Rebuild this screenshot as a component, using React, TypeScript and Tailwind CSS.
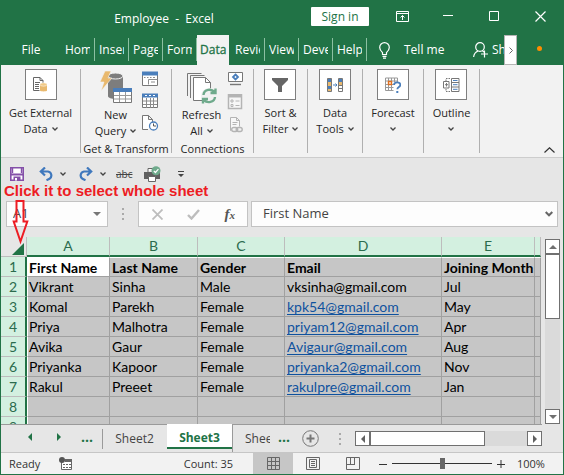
import type { ReactNode } from "react";

const UI = "font-['Open_Sans','Noto_Sans',sans-serif]";
const CELL = "font-['Lato','Noto_Sans',sans-serif]";

const TABS = ["Hom", "Inser", "Page", "Form", "Data", "Revie", "View", "Deve", "Help"];

const COLUMNS = [
  { letter: "A", width: "w-[83px]" },
  { letter: "B", width: "w-[88px]" },
  { letter: "C", width: "w-[87px]" },
  { letter: "D", width: "w-[157px]" },
  { letter: "E", width: "w-[93px]" },
  { letter: "", width: "" },
];

const ROWS: string[][] = [
  ["First Name", "Last Name", "Gender", "Email", "Joining Month"],
  ["Vikrant", "Sinha", "Male", "vksinha@gmail.com", "Jul"],
  ["Komal", "Parekh", "Female", "kpk54@gmail.com", "May"],
  ["Priya", "Malhotra", "Female", "priyam12@gmail.com", "Apr"],
  ["Avika", "Gaur", "Female", "Avigaur@gmail.com", "Aug"],
  ["Priyanka", "Kapoor", "Female", "priyanka2@gmail.com", "Nov"],
  ["Rakul", "Preeet", "Female", "rakulpre@gmail.com", "Jan"],
  [],
  [],
];

function Chevron({ className = "" }: { className?: string }) {
  return (
    <svg width="6" height="4" viewBox="0 0 6 4" fill="none" stroke="#444" strokeWidth="1.3" className={className}>
      <path d="M0.5 0.5L3 3L5.500 0.500" />
    </svg>
  );
}

function TitleBar() {
  return (
    <header className="flex h-[35px] shrink-0 items-start text-white">
      <h1 className="flex-1 whitespace-pre pt-[10px] pl-4 text-center text-[12px] leading-[18px]">Employee  -  Excel</h1>
      <button className="mt-[7px] mr-[10px] h-[19px] w-[58px] rounded-[1px] bg-white text-[12px] leading-[18px] text-[#217346]">
        Sign in
      </button>
      <div className="flex h-8">
        <button aria-label="Ribbon display options" className="flex w-[46px] items-center justify-center">
          <svg width="13" height="11" viewBox="0 0 13 11" fill="none" stroke="#fff">
            <path d="M0.500 0.500h12v10h-12zM0.500 2.500h12M6.500 9V4.500M4.500 6.500l2-2l2 2" />
          </svg>
        </button>
        <button aria-label="Minimize" className="flex w-[46px] items-center justify-center">
          <svg width="10" height="10" stroke="#fff"><path d="M0 4.500h10" /></svg>
        </button>
        <button aria-label="Maximize" className="flex w-[46px] items-center justify-center">
          <svg width="10" height="10" fill="none" stroke="#fff"><path d="M0.500 0.500h9v9h-9z" /></svg>
        </button>
        <button aria-label="Close" className="flex w-[46px] items-center justify-center">
          <svg width="11" height="11" stroke="#fff" strokeWidth="1.200"><path d="M0.500 0.500l10 10M10.500 0.500l-10 10" /></svg>
        </button>
      </div>
    </header>
  );
}

function TabBar() {
  return (
    <nav className="flex h-[30px] shrink-0 text-[12px] leading-[30px] text-white">
      <button className="w-[60px] text-center">File</button>
      {TABS.map((name) =>
        name === "Data" ? (
          <button key={name} className="h-full w-[34px] border-r-2 border-[#217346] bg-[#f2f2f2] px-[3px] text-left text-[#217346] [-webkit-text-stroke:0.3px]">
            {name}
          </button>
        ) : (
          <button key={name} className="mt-[3px] h-[23px] w-[34px] border-r border-[#8cc0a2] px-1 text-left leading-[24px]">
            <span className="block overflow-hidden whitespace-nowrap">{name}</span>
          </button>
        ),
      )}
      <button className="ml-3 flex items-center gap-[14px] whitespace-nowrap">
        <svg width="11" height="17" viewBox="0 0 11 17" fill="none" stroke="#fff" strokeWidth="1.200">
          <path d="M3.500 12.500v-2C2 9 0.700 7.800 0.700 5.400a4.800 4.800 0 0 1 9.600 0c0 2.400-1.300 3.600-2.800 5.100v2zM3.500 14.300h4M4 16.200h3" />
        </svg>
        Tell me
      </button>
      <div className="flex-1" />
      <button className="flex w-[31px] items-center gap-1 overflow-hidden whitespace-nowrap">
        <svg width="15" height="16" viewBox="0 0 15 16" fill="none" stroke="#fff" strokeWidth="1.200" className="shrink-0">
          <circle cx="7" cy="5" r="4.300" />
          <path d="M0.600 15c0.400-3.200 2-5 4.400-6M9.500 9l1.500 1M11.500 8.500v7M8 12h7" />
        </svg>
        Sh
      </button>
      <button aria-label="Scroll tabs" className="flex h-[30px] w-[13px] items-center justify-center border border-[#b5b5b5] bg-white">
        <svg width="4" height="7" fill="none" stroke="#666"><path d="M0.500 0.500l3 3l-3 3" /></svg>
      </button>
      <span className="mt-[11px] mr-[21px] ml-[20px] size-[5px] rounded-full bg-[#ff8c00]" />
    </nav>
  );
}

function IconBox({ children }: { children: ReactNode }) {
  return <span className="flex h-[31px] w-8 items-center justify-center border border-[#7f7f7f] bg-white">{children}</span>;
}

function Group({ width, icon, lines }: { width: string; icon: ReactNode; lines: string[] }) {
  return (
    <section className={`${width} flex h-[84px] shrink-0 flex-col items-center border-r border-[#b0b0b0]`}>
      <button className="flex flex-col items-center text-center text-[11px] leading-4 whitespace-nowrap">
        <IconBox>{icon}</IconBox>
        <span className="mt-[5px]">{lines[0]}</span>
        <span className="flex h-4 items-center gap-1">
          {lines[1] && <span>{lines[1]}</span>}
          <Chevron />
        </span>
      </button>
    </section>
  );
}

function MiniTable({ full }: { full?: boolean }) {
  return (
    <svg width="16" height="16" viewBox="0 0 16 16" fill="none">
      <path d="M0.500 1.500h15v13h-15z" fill="#fff" stroke="#777" />
      <path d="M0 0.500h16v4h-16z" fill="#4a7ebb" />
      {full ? (
        <>
          <path d="M4.500 5v10M8.500 5v10M11.500 5v10M1 8h14M1 11.500h14" stroke="#8c8c8c" />
          <path d="M3 2.500h2M7 2.500h2M11 2.500h2" stroke="#fff" />
        </>
      ) : (
        <path d="M2 6.500h1.500M5 6.500h1.500M8 6.500h1.500M11 6.500h2M6.500 8.500v5M6.500 8.500h9M9 11h4" stroke="#8c8c8c" />
      )}
    </svg>
  );
}

function Ribbon() {
  return (
    <div className="flex h-[93px] shrink-0 items-start border-b border-[#cdcdcd] bg-[#f2f2f2] pt-1 text-[#262626]">
      <Group
        width="w-20"
        lines={["Get External", "Data"]}
        icon={
          <svg width="15" height="16" viewBox="0 0 15 16" fill="none" stroke="#666">
            <path d="M0.500 0.500h6.500l3 3v3M7 0.500v3h3M0.500 0.500v13h6M2 5.500h5M2 7.500h4M2 9.500h4M2 11.500h4" />
            <path d="M7 7.500v6c0 1.200 7 1.200 7 0v-6z" fill="#e9b96e" stroke="none" />
            <ellipse cx="10.500" cy="7.500" rx="3.500" ry="1.700" fill="#f0c987" stroke="#fff" strokeWidth="0.500" />
          </svg>
        }
      />
      <section className="flex h-[84px] w-[91px] shrink-0 flex-col items-center border-r border-[#b0b0b0] text-[11px] leading-4 whitespace-nowrap">
        <div className="flex gap-1 self-start pl-3">
          <button className="flex w-[45px] flex-col items-center">
            <svg width="32" height="33" viewBox="0 0 32 33" fill="none" className="mt-[2px]">
              <path d="M8 5v20c0 4 15 4 15 0V5z" fill="#7d7d7d" />
              <ellipse cx="15.500" cy="5" rx="7.500" ry="3" fill="#7d7d7d" stroke="#f2f2f2" />
              <path d="M5 0h6L8 7h4L1 20l3-9H0z" fill="#e9b96e" stroke="#f2f2f2" strokeWidth="0.600" />
              <path d="M13.500 17.500h18v14h-18z" fill="#fff" stroke="#777" />
              <path d="M13 17h19v4H13z" fill="#4a7ebb" />
              <path d="M19.500 21v10M25.500 21v10M14 24.500h17M14 28h17" stroke="#999" />
            </svg>
            <span className="mt-[3px]">New</span>
            <span className="flex h-4 items-center gap-1">Query <Chevron /></span>
          </button>
          <div className="flex flex-col gap-[6px] pt-[2px]">
            <button aria-label="Show queries"><MiniTable /></button>
            <button aria-label="From table"><MiniTable full /></button>
            <button aria-label="Recent sources">
              <svg width="17" height="16" viewBox="0 0 17 16" fill="none">
                <path d="M6 14.500H0.500v-14h6l4 4V7M6.500 0.500v4h4" stroke="#777" fill="#fff" />
                <circle cx="11.500" cy="11" r="4" fill="#fff" stroke="#4a7ebb" strokeWidth="1.300" />
                <path d="M11.500 8.500V11h2.500" stroke="#555" />
              </svg>
            </button>
          </div>
        </div>
        <span className="mt-auto -mb-1">Get &amp; Transform</span>
      </section>
      <section className="flex h-[84px] w-[82px] shrink-0 flex-col items-center border-r border-[#b0b0b0] text-[11px] leading-4 whitespace-nowrap">
        <div className="flex gap-1 self-start pl-2">
          <button className="flex w-[43px] flex-col items-center">
            <svg width="30" height="31" viewBox="0 0 30 31" fill="none" className="mt-1" stroke="#777">
              <path d="M0.500 23V0.500h14" />
              <path d="M3.500 25V2.500h14" />
              <path d="M6.500 27.500v-23h12l5 5v18z" fill="#fff" />
              <path d="M18.500 4.500v5h5" />
              <circle cx="22" cy="23" r="8" fill="#f2f2f2" stroke="none" />
              <path d="M16.500 22c0.500-6 8-6.500 11-3M28.500 15.500v4.500h-5M28 24c-0.500 5.500-8 6.500-11 3M16 30.500V26h5" stroke="#6faa8c" strokeWidth="2.400" />
            </svg>
            <span className="mt-[3px]">Refresh</span>
            <span className="flex h-4 items-center gap-1">All <Chevron /></span>
          </button>
          <div className="flex flex-col gap-[7px] pt-[2px]">
            <button aria-label="Queries and connections">
              <svg width="16" height="16" viewBox="0 0 16 16" fill="none">
                <path d="M1.500 1.500h14v9h-14z" fill="#fff" stroke="#777" />
                <path d="M8.500 3.500l2.500 2.500l-2.500 2.500l-2.500-2.500z" stroke="#4a7ebb" strokeWidth="1.800" />
                <path d="M3 13.500h11" stroke="#777" strokeWidth="1.400" />
              </svg>
            </button>
            <button aria-label="Properties">
              <svg width="16" height="16" viewBox="0 0 16 16" fill="none" stroke="#b4b4b4">
                <path d="M1.500 0.500h13v14h-13z" fill="#f7f7f7" strokeWidth="1.500" />
                <path d="M1 2h14" strokeWidth="3" />
                <path d="M4 6h2v2H4zM4 10.500h2v2H4zM8.500 7h4M8.500 11.500h4" />
              </svg>
            </button>
            <button aria-label="Edit links">
              <svg width="16" height="16" viewBox="0 0 16 16" fill="none" stroke="#b4b4b4">
                <path d="M4 13.500h-0.500v-13h6l3 3v6M9.500 0.500v3h3M5.500 5.500h5M5.500 7.500h4" fill="#f7f7f7" />
                <rect x="4.700" y="10.500" width="6" height="4" rx="2" strokeWidth="1.400" />
                <rect x="9.200" y="10.500" width="6" height="4" rx="2" strokeWidth="1.400" />
              </svg>
            </button>
          </div>
        </div>
        <span className="mt-auto -mb-1">Connections</span>
      </section>
      <Group
        width="w-[54px]"
        lines={["Sort &", "Filter"]}
        icon={<svg width="16" height="14" fill="#666"><path d="M0 0h16v2L10 8v6H6V8L0 2z" /></svg>}
      />
      <Group
        width="w-[55px]"
        lines={["Data", "Tools"]}
        icon={
          <svg width="16" height="14" viewBox="0 0 16 14" fill="none">
            <path d="M0.500 0.500h4v13h-4z" fill="#e9b96e" stroke="#777" />
            <path d="M1 1h3v3H1zM1 8h3v3H1z" fill="#4a7ebb" />
            <path d="M6 7h4M8.500 5.500l1.500 1.500l-1.500 1.500" stroke="#4a7ebb" />
            <path d="M11.500 0.500h4v13h-4z" fill="#fff" stroke="#777" />
            <path d="M12 1h3v3h-3z" fill="#4a7ebb" />
            <path d="M12 4h3v3h-3z" fill="#e9b96e" />
            <path d="M12 7.500h3M12 10.500h3" stroke="#777" />
          </svg>
        }
      />
      <Group
        width="w-[61px]"
        lines={["Forecast"]}
        icon={
          <svg width="16" height="16" viewBox="0 0 16 16" fill="none">
            <path d="M0.500 1v12.500h8M0.500 1h12v4M3.500 1v12M6.500 1v12M9.500 1v4M0.500 4h12M0.500 7.500h8M0.500 10.500h8" stroke="#999" />
            <path d="M3.500 4.500h3v3h-3z" stroke="#e07020" strokeWidth="1.400" fill="#fff" />
            <path d="M9 8c0-3.500 6.500-3.500 6.300 0c0 2-3 2-3 4.300" stroke="#4a7ebb" strokeWidth="1.800" />
            <path d="M11.300 14h2v2h-2z" fill="#4a7ebb" />
          </svg>
        }
      />
      <Group
        width="w-14"
        lines={["Outline"]}
        icon={
          <svg width="17" height="14" viewBox="0 0 17 14" fill="none" stroke="#777">
            <path d="M7 0.500h-4v3M7 13.500h-4v-3" strokeDasharray="1.500 1" />
            <path d="M0.500 3.500h5.500v6.500h-5.500zM2 6.700h3M3.500 5v3.500" />
            <path d="M8.500 0.500h7.500v13h-7.500zM8.500 4.500h7.500M8.500 9h7.500" />
            <path d="M10 2.500h4.500M10 6.700h4.500M10 11.300h4.500" stroke="#4a7ebb" />
          </svg>
        }
      />
      <div className="flex-1" />
      <button aria-label="Collapse ribbon" className="mr-2 self-end pb-1">
        <svg width="11" height="6" fill="none" stroke="#333" strokeWidth="1.200"><path d="M0.500 5.500l5-4.700l5 4.700" /></svg>
      </button>
    </div>
  );
}

function QuickAccess() {
  return (
    <div className="relative flex h-8 shrink-0 items-center pl-[9px]">
      <button aria-label="Save">
        <svg width="14" height="14" viewBox="0 0 14 14" fill="none">
          <path d="M0.800 0.800h12.400v12.400H0.800z" fill="#fff" stroke="#8450a8" strokeWidth="1.600" />
          <path d="M0.500 6.500h13v2h-13zM3.500 9.500h7v4h-7z" fill="#8450a8" />
          <path d="M2.500 1v5M11.500 1v5" stroke="#8450a8" strokeWidth="1.400" />
          <path d="M5 11h2v2.500H5z" fill="#fff" />
        </svg>
      </button>
      <button aria-label="Undo" className="ml-[15px]">
        <svg width="15" height="14" viewBox="0 0 15 14" fill="none" stroke="#3f78bd" strokeWidth="2.200">
          <path d="M6 0.500L1.800 4.500l4.200 4M2 4.500h7a4 4 0 0 1 1.500 7.300l-3 1.400" />
        </svg>
      </button>
      <Chevron className="ml-[6px]" />
      <button aria-label="Redo" className="ml-3">
        <svg width="15" height="14" viewBox="0 0 15 14" fill="none" stroke="#3f78bd" strokeWidth="2.200">
          <path d="M9 0.500l4.200 4l-4.200 4M13 4.500H6a4 4 0 0 0-1.500 7.300l3 1.400" />
        </svg>
      </button>
      <Chevron className="ml-[7px]" />
      <button aria-label="Strikethrough" className="ml-[10px] text-[10px] leading-4 text-[#444] line-through">abc</button>
      <button aria-label="Quick print" className="ml-3">
        <svg width="17" height="17" viewBox="0 0 17 17" fill="none">
          <path d="M4 6V2.500h5" stroke="#666" fill="#fff" />
          <path d="M0 6h16v7H0z" fill="#606060" />
          <path d="M4.500 10.500h7v5h-7z" fill="#fff" stroke="#666" />
          <circle cx="12" cy="4.800" r="4.500" fill="#6faa8c" />
          <path d="M9.800 4.800l1.600 1.700l3-3.300" stroke="#fff" strokeWidth="1.200" />
        </svg>
      </button>
      <button aria-label="Customize toolbar" className="ml-[17px]">
        <svg width="6" height="6" fill="#444"><path d="M0 0h6v1H0zM0 3h6L3 6z" /></svg>
      </button>
      <p className="absolute top-[25px] left-[3px] z-10 font-['Liberation_Sans',Arial,sans-serif] text-[15px] leading-4 font-bold whitespace-nowrap text-[#ed1c24] [text-shadow:none]">
        Click it to select whole sheet
      </p>
      <svg width="17" height="47" viewBox="0 0 17 47" fill="none" stroke="#ed1c24" strokeWidth="2" className="absolute top-[41px] left-[11px] z-10">
        <path d="M4.500 2h7v20.500H15.300L8.500 42.500L1.700 22.500h2.800z" />
      </svg>
    </div>
  );
}

function FormulaBar() {
  const box = "flex h-[26px] items-center border border-[#c3c3c3] bg-[#fdfdfd]";
  return (
    <div className="flex h-[47px] shrink-0 items-start pt-[11px] pr-[5px] pl-[5px] text-[13px] text-[#444]">
      <div className={`${box} w-[102px] pr-[6px] pl-[6px]`}>
        <input aria-label="Name box" defaultValue="A1" className="w-full min-w-0 bg-transparent outline-none" />
        <svg width="8" height="4" fill="#777" className="shrink-0"><path d="M0 0h8L4 4z" /></svg>
      </div>
      <svg width="2" height="12" fill="#aaa" className="mx-[14px] mt-[7px]"><path d="M0 0h2v2H0zM0 5h2v2H0zM0 10h2v2H0z" /></svg>
      <div className={`${box} w-[110px] justify-between pr-3 pl-[13px]`}>
        <button aria-label="Cancel">
          <svg width="11" height="11" stroke="#bdbdbd" strokeWidth="1.800"><path d="M0.500 0.500l10 10M10.500 0.500l-10 10" /></svg>
        </button>
        <button aria-label="Enter">
          <svg width="13" height="11" fill="none" stroke="#bdbdbd" strokeWidth="2.400"><path d="M1 6l3.500 3.500L12 1" /></svg>
        </button>
        <button aria-label="Insert function" className="font-['Liberation_Serif',serif] text-[15px] leading-5 font-bold text-[#555] italic">
          f<span className="text-[11px]">x</span>
        </button>
      </div>
      <div className={`${box} ml-[3px] flex-1 pr-1 pl-[11px]`}>
        <input aria-label="Formula" defaultValue="First Name" className="w-full min-w-0 bg-transparent outline-none" />
        <svg width="8" height="6" fill="none" stroke="#666" strokeWidth="2" className="shrink-0"><path d="M0.700 1l3.300 3.300L7.300 1" /></svg>
      </div>
    </div>
  );
}

const headCell = "h-5 border-b-2 border-r border-b-[#217346] border-r-[#bdbdbd] bg-[#d3f0e0] p-0 font-normal text-[#2b6b4d]";

function Sheet() {
  return (
    <div className="flex min-h-0 flex-1">
      <div className="min-w-0 flex-1 overflow-hidden bg-[#c6c6c6]">
        <table className={`${CELL} w-full table-fixed border-separate border-spacing-0 text-[14px] leading-[18px]`}>
          <colgroup>
            <col className="w-[26px]" />
            {COLUMNS.map((c, i) => <col key={i} className={c.width} />)}
          </colgroup>
          <thead>
            <tr>
              <th className="h-5 border-r border-b border-[#bdbdbd] bg-[#e6e6e6] p-0">
                <button aria-label="Select all" className="flex h-[18px] w-full items-end justify-end pr-[2px] pb-px">
                  <svg width="12" height="12" fill="#217346"><path d="M12 0v12H0z" /></svg>
                </button>
              </th>
              {COLUMNS.map((c, i) => <th key={i} className={headCell}>{c.letter}</th>)}
            </tr>
          </thead>
          <tbody className="text-black">
            {ROWS.map((row, r) => (
              <tr key={r}>
                <th className="h-5 border-r-2 border-b border-r-[#217346] border-b-[#bdbdbd] bg-[#d3f0e0] p-0 text-center font-normal text-[#2b6b4d]">
                  {r + 1}
                </th>
                {COLUMNS.map((_, c) => {
                  const edge = `${r === 0 ? "border-t border-t-white font-bold leading-[17px]" : ""} ${c === 0 ? "border-l border-l-white" : ""}`;
                  const fill = r === 0 && c === 0 ? "bg-white" : "bg-[#c6c6c6]";
                  const text = row[c];
                  return (
                    <td key={c} className={`h-5 border-r border-b border-r-[#a0a0a0] border-b-[#a0a0a0] p-0 whitespace-nowrap ${c === 0 ? "pl-px" : "pl-[2px]"} ${edge} ${fill}`}>
                      {c === 3 && r > 1 && text ? (
                        <a href={`mailto:${text}`} className="text-[#0f529e] underline underline-offset-2 [text-decoration-skip-ink:none]">{text}</a>
                      ) : (
                        text
                      )}
                    </td>
                  );
                })}
              </tr>
            ))}
          </tbody>
        </table>
      </div>
      <div className="flex w-[22px] flex-col pt-[2px] pr-[3px] pl-1">
        <button aria-label="Scroll up" className="flex h-[15px] items-center justify-center border border-[#707070] bg-white">
          <svg width="8" height="4" fill="#707070"><path d="M0 4h8L4 0z" /></svg>
        </button>
        <div className="flex-1 bg-[#dadada]">
          <div className="h-[65px] border border-[#707070] bg-white" />
        </div>
        <button aria-label="Scroll down" className="flex h-[15px] items-center justify-center border border-[#707070] bg-white">
          <svg width="8" height="4" fill="#707070"><path d="M0 0h8L4 4z" /></svg>
        </button>
      </div>
    </div>
  );
}

function SheetTabs() {
  return (
    <div className="flex h-[29px] shrink-0 border-b border-[#c6c6c6] pr-[21px] text-[12px] leading-[26px] text-[#444]">
      <div className="flex w-[101px] items-start border-t border-[#9a9a9a] pl-[27px]">
        <button aria-label="Previous sheet" className="mt-2"><svg width="4" height="8" fill="#217346"><path d="M4 0v8L0 4z" /></svg></button>
        <button aria-label="Next sheet" className="mt-2 ml-[25px]"><svg width="4" height="8" fill="#217346"><path d="M0 0v8L4 4z" /></svg></button>
        <span className="ml-5 text-[14px] leading-6 font-bold text-[#217346]">...</span>
      </div>
      <button className="relative w-[65px] border-t border-[#9a9a9a] before:absolute before:top-1 before:left-0 before:h-5 before:w-px before:bg-[#9a9a9a]">Sheet2</button>
      <button className="h-[25px] w-[65px] border-b-2 border-[#217346] bg-white pt-px font-bold text-[#217346]">Sheet3</button>
      <button className="w-[38px] border-t border-l border-[#9a9a9a] pl-3 text-left">
        <span className="block overflow-hidden whitespace-nowrap">Shee</span>
      </button>
      <span className="w-[32px] border-t border-[#9a9a9a] pl-2 text-[14px] leading-6 font-bold text-[#217346]">...</span>
      <button aria-label="New sheet" className="flex w-[17px] items-center border-t border-[#9a9a9a]">
        <svg width="17" height="17" fill="none" stroke="#777" className="shrink-0">
          <circle cx="8.500" cy="8.500" r="7.800" />
          <path d="M8.500 4.500v8M4.500 8.500h8" strokeWidth="2" />
        </svg>
      </button>
      <div className="flex w-[36px] items-center justify-center border-t border-[#9a9a9a] pl-[6px]">
        <svg width="2" height="12" fill="#aaa"><path d="M0 0h2v2H0zM0 5h2v2H0zM0 10h2v2H0z" /></svg>
      </div>
      <div className="flex flex-1 border-t border-[#9a9a9a] pt-[6px]">
        <button aria-label="Scroll left" className="flex size-[15px] items-center justify-center border border-[#707070] bg-white">
          <svg width="4" height="8" fill="#606060"><path d="M4 0v8L0 4z" /></svg>
        </button>
        <div className="h-[15px] flex-1 bg-[#dadada]">
          <div className="h-full w-[115px] border border-[#707070] bg-white" />
        </div>
        <button aria-label="Scroll right" className="flex size-[15px] items-center justify-center border border-[#707070] bg-white">
          <svg width="4" height="8" fill="#606060"><path d="M0 0v8L4 4z" /></svg>
        </button>
      </div>
    </div>
  );
}

function StatusBar() {
  return (
    <footer className="flex h-[21px] shrink-0 items-center bg-[#f2f2f2] pl-2 text-[11px] leading-5 text-[#333]">
      <span className="w-[50px]">Ready</span>
      <svg width="13" height="13" viewBox="0 0 13 13" fill="none">
        <path d="M2.500 5v7.500h10v-10H6" stroke="#666" fill="#fff" />
        <path d="M6 2h7v3H6z" fill="#666" />
        <circle cx="3" cy="3" r="3" fill="#555" />
        <path d="M4 7.500h2M7 7.500h2M10 7.500h2M4 10.500h2M7 10.500h2M10 10.500h2" stroke="#666" />
      </svg>
      <span className="flex-1 pr-5 text-right whitespace-nowrap">Count: 35</span>
      <button aria-label="Normal view" aria-pressed="true" className="flex h-full w-10 items-center justify-center bg-[#c6c6c6]">
        <svg width="13" height="13" fill="none" stroke="#666"><path d="M0.500 0.500h12v12h-12zM4.500 0v13M8.500 0v13M0 4.500h13M0 8.500h13" /></svg>
      </button>
      <button aria-label="Page layout" className="flex w-10 items-center justify-center">
        <svg width="14" height="13" fill="none" stroke="#666"><path d="M0.500 0.500h13v12h-13zM3.500 2.500h7v8h-7zM5 4.500h4M5 6.500h4M5 8.500h4" /></svg>
      </button>
      <button aria-label="Page break preview" className="flex w-10 items-center justify-center">
        <svg width="14" height="13" fill="none" stroke="#666"><path d="M0.500 0.500h13v12h-13zM4.500 0v7.500M8.500 0v7.500M0 7.500h9" /></svg>
      </button>
      <button aria-label="Zoom out" className="ml-[6px]"><svg width="8" height="8" stroke="#333"><path d="M0 4.500h8" /></svg></button>
      <input
        type="range"
        aria-label="Zoom"
        defaultValue={50}
        className="mx-[5px] h-3 w-[100px] appearance-none bg-transparent [&::-webkit-slider-runnable-track]:h-px [&::-webkit-slider-runnable-track]:bg-[#333] [&::-webkit-slider-thumb]:-mt-[5px] [&::-webkit-slider-thumb]:h-[11px] [&::-webkit-slider-thumb]:w-[5px] [&::-webkit-slider-thumb]:appearance-none [&::-webkit-slider-thumb]:bg-[#666]"
      />
      <button aria-label="Zoom in"><svg width="8" height="8" stroke="#333"><path d="M0 4.500h8M4 0v8" /></svg></button>
      <span className="mr-[18px] ml-3 w-7">100%</span>
    </footer>
  );
}

export default function App() {
  return (
    <div className={`${UI} flex h-screen flex-col overflow-hidden border-x border-b border-[#217346] bg-[#217346]`}>
      <TitleBar />
      <TabBar />
      <Ribbon />
      <main className="flex min-h-0 flex-1 flex-col bg-[#e6e6e6]">
        <QuickAccess />
        <FormulaBar />
        <Sheet />
        <SheetTabs />
      </main>
      <StatusBar />
    </div>
  );
}
